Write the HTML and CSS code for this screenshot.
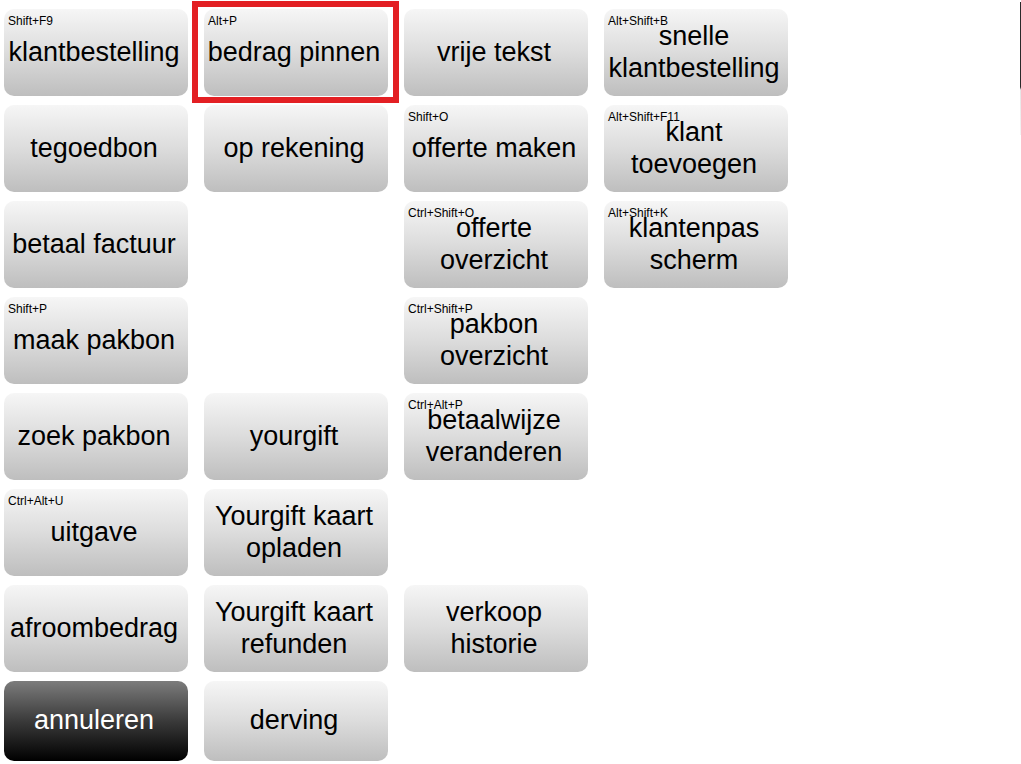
FILE: index.html
```html
<!DOCTYPE html>
<html lang="nl">
<head>
<meta charset="utf-8">
<title>Kassa functies</title>
<link rel="stylesheet" href="styles.css">
</head>
<body>
<div class="grid">
  <button class="key"><span class="hot">Shift+F9</span><span class="label">klantbestelling</span></button>
  <button class="key selected"><span class="hot">Alt+P</span><span class="label">bedrag pinnen</span></button>
  <button class="key"><span class="label">vrije tekst</span></button>
  <button class="key"><span class="hot">Alt+Shift+B</span><span class="label">snelle klantbestelling</span></button>

  <button class="key"><span class="label">tegoedbon</span></button>
  <button class="key"><span class="label">op rekening</span></button>
  <button class="key"><span class="hot">Shift+O</span><span class="label">offerte maken</span></button>
  <button class="key"><span class="hot">Alt+Shift+F11</span><span class="label">klant toevoegen</span></button>

  <button class="key"><span class="label">betaal factuur</span></button>
  <div class="empty"></div>
  <button class="key"><span class="hot">Ctrl+Shift+O</span><span class="label">offerte overzicht</span></button>
  <button class="key"><span class="hot">Alt+Shift+K</span><span class="label">klantenpas scherm</span></button>

  <button class="key"><span class="hot">Shift+P</span><span class="label">maak pakbon</span></button>
  <div class="empty"></div>
  <button class="key"><span class="hot">Ctrl+Shift+P</span><span class="label">pakbon overzicht</span></button>
  <div class="empty"></div>

  <button class="key"><span class="label">zoek pakbon</span></button>
  <button class="key"><span class="label">yourgift</span></button>
  <button class="key"><span class="hot">Ctrl+Alt+P</span><span class="label">betaalwijze veranderen</span></button>
  <div class="empty"></div>

  <button class="key"><span class="hot">Ctrl+Alt+U</span><span class="label">uitgave</span></button>
  <button class="key"><span class="label">Yourgift kaart opladen</span></button>
  <div class="empty"></div>
  <div class="empty"></div>

  <button class="key"><span class="label">afroombedrag</span></button>
  <button class="key"><span class="label">Yourgift kaart refunden</span></button>
  <button class="key"><span class="label">verkoop historie</span></button>
  <div class="empty"></div>

  <button class="key dark"><span class="label">annuleren</span></button>
  <button class="key"><span class="label">derving</span></button>
  <div class="empty"></div>
  <div class="empty"></div>
</div>
<div class="edge"></div>
</body>
</html>
```

FILE: styles.css
```css
html, body {
  margin: 0;
  padding: 0;
  background: #ffffff;
  overflow: hidden;
}

body {
  font-family: "Liberation Sans", Arial, sans-serif;
  width: 1021px;
  height: 764px;
}

.grid {
  display: grid;
  grid-template-columns: repeat(4, 184px);
  grid-template-rows: repeat(7, 87px) 80px;
  column-gap: 16px;
  row-gap: 9px;
  padding: 9px 0 0 4px;
}

.key {
  position: relative;
  display: flex;
  align-items: center;
  justify-content: center;
  margin: 0;
  padding: 0 5px 2px 1px;
  border: none;
  border-radius: 10px;
  background: linear-gradient(to bottom, #f6f6f6 0%, #dcdcdc 50%, #bebebe 100%);
  font-family: "Liberation Sans", Arial, sans-serif;
  color: #000000;
  text-align: center;
  cursor: pointer;
}

.label {
  font-size: 27px;
  line-height: 32px;
}

.hot {
  position: absolute;
  top: 4px;
  left: 4px;
  font-size: 12px;
  line-height: 16px;
  white-space: nowrap;
  color: #000000;
}

.dark {
  background: linear-gradient(to bottom, #7c7c7c 0%, #3a3a3a 50%, #000000 100%);
  color: #ffffff;
}

.selected::after {
  content: "";
  position: absolute;
  left: -12px;
  top: -8px;
  right: -11px;
  bottom: -7px;
  border: 6px solid #e31f23;
  pointer-events: none;
}

.edge {
  position: fixed;
  top: 2px;
  right: 0;
  width: 1px;
  height: 133px;
  background: linear-gradient(to bottom, #2a2a2a 0%, #2a2a2a 64%, #e6e6e6 66%, #f4f4f4 100%);
}
```
